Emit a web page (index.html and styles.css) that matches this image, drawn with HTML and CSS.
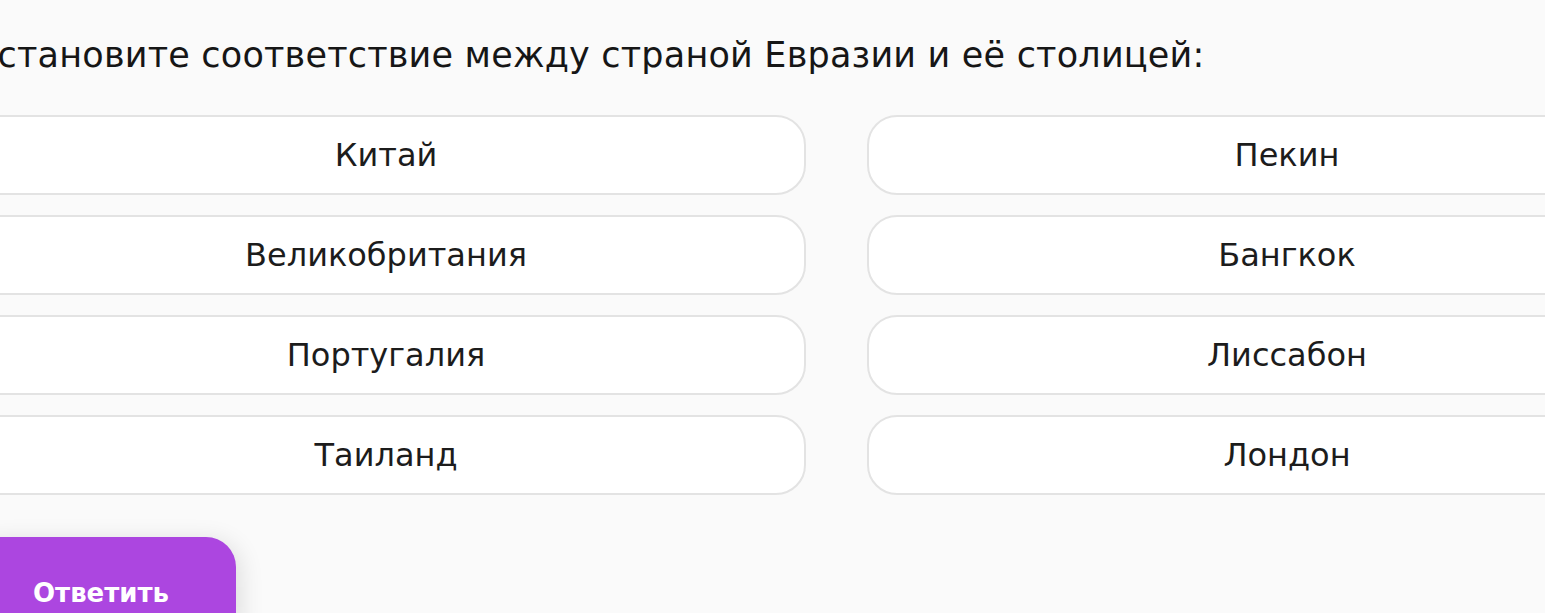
FILE: index.html
```html
<!DOCTYPE html>
<html lang="ru">
<head>
    <meta charset="UTF-8">
    <meta name="viewport" content="width=device-width, initial-scale=1.0">
    <title>Установите соответствие</title>
    <link rel="stylesheet" href="styles.css">
</head>
<body>
    <main class="task">
        <h1 class="task-title">Установите соответствие между страной Евразии и её столицей:</h1>

        <div class="match-grid">
            <div class="match-item">Китай</div>
            <div class="match-item">Пекин</div>
            <div class="match-item">Великобритания</div>
            <div class="match-item">Бангкок</div>
            <div class="match-item">Португалия</div>
            <div class="match-item">Лиссабон</div>
            <div class="match-item">Таиланд</div>
            <div class="match-item">Лондон</div>
        </div>

        <button type="button" class="answer-btn">Ответить</button>
    </main>
</body>
</html>
```

FILE: styles.css
```css
body {
    margin: 0;
    background-color: #fafafa;
    color: #161616;
    font-family: "DejaVu Sans", "Noto Sans", sans-serif;
    overflow: hidden;
}
.task {
    width: 1741px;
    margin-left: -34px;
    padding-top: 33px;
}
.task-title {
    margin: 0 0 38px 0;
    padding-left: 10px;
    font-size: 35px;
    font-weight: normal;
    line-height: 44px;
    letter-spacing: 0.2px;
    white-space: nowrap;
}
.match-grid {
    display: grid;
    grid-template-columns: 840px 840px;
    column-gap: 61px;
    row-gap: 20px;
}
.match-item {
    height: 76px;
    display: flex;
    align-items: center;
    justify-content: center;
    background: #ffffff;
    border: 2px solid #e3e3e3;
    border-radius: 30px;
    font-size: 32px;
    color: #1c1c1c;
}
.answer-btn {
    display: block;
    margin-top: 42px;
    width: 270px;
    height: 112px;
    padding: 0;
    border: none;
    border-radius: 30px;
    background-color: #ac46e0;
    color: #ffffff;
    font-family: "DejaVu Sans", sans-serif;
    font-size: 26px;
    font-weight: bold;
    box-shadow: 4px 4px 24px rgba(0, 0, 0, 0.12);
    cursor: pointer;
}
```
